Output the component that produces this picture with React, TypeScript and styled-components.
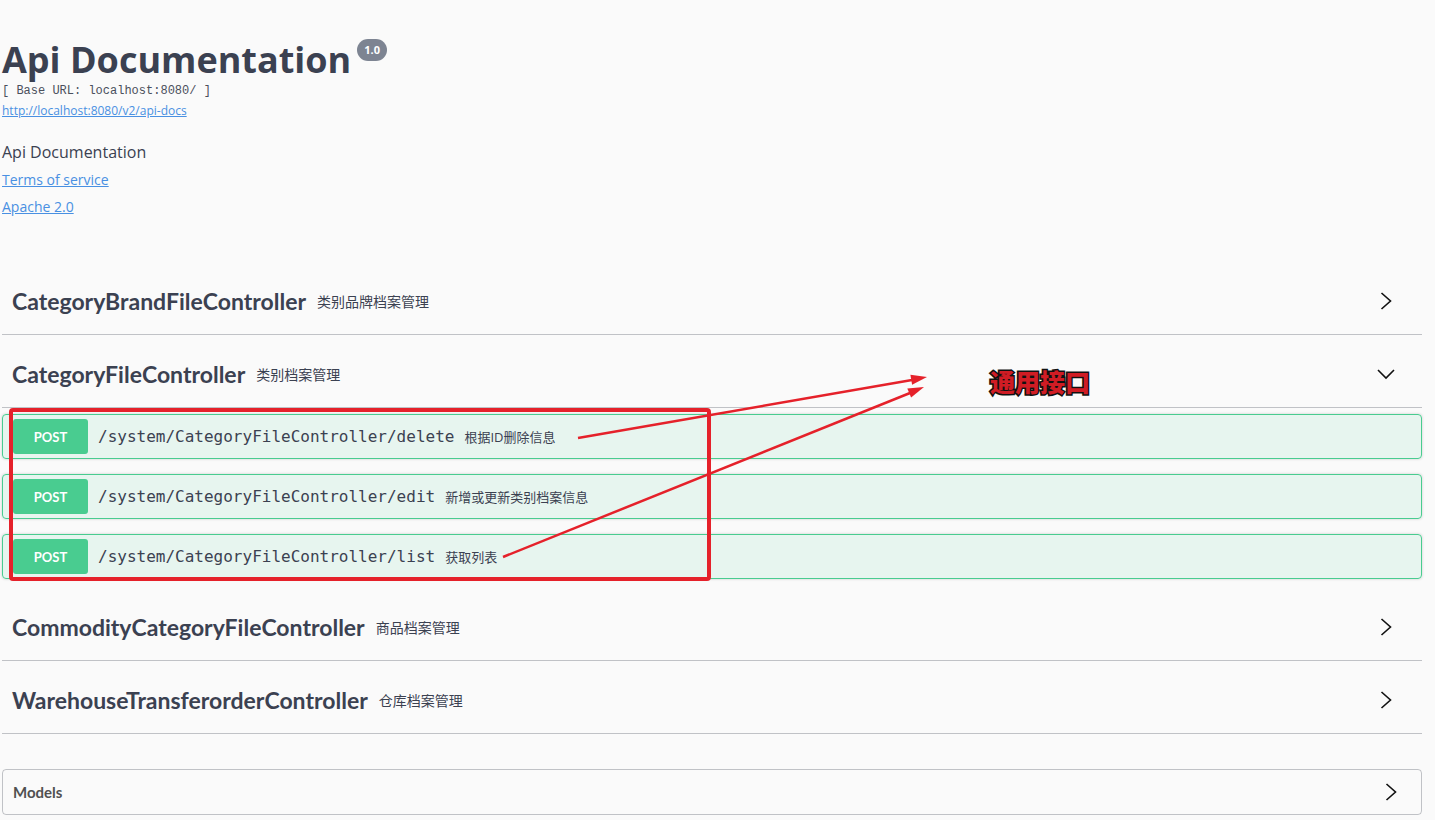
import React from "react";
import styled, { createGlobalStyle } from "styled-components";

const GlobalStyle = createGlobalStyle`
  html, body {
    margin: 0;
    padding: 0;
    background: #fafafa;
  }
  body {
    font-family: "Open Sans", "Noto Sans CJK SC", sans-serif;
    color: #3b4151;
  }
`;

const Shell = styled.div`
  position: relative;
  width: 1435px;
  min-height: 820px;
  overflow: hidden;
`;

const Page = styled.div`
  padding: 0 13px 0 2px;
`;

const Info = styled.div`
  padding-top: 38px;
  display: flex;
  flex-direction: column;
  align-items: flex-start;
`;

const TitleRow = styled.div`
  display: flex;
  align-items: flex-start;
  height: 44px;
`;

const Title = styled.h2`
  margin: 0;
  font-family: "Open Sans", sans-serif;
  font-weight: 700;
  font-size: 36px;
  line-height: 44px;
  color: #3b4151;
`;

const Version = styled.span`
  margin: 1px 0 0 6px;
  padding: 4px 7px;
  border-radius: 57px;
  background: #7d8492;
  color: #fff;
  font-family: "Open Sans", sans-serif;
  font-weight: 700;
  font-size: 11px;
  line-height: 14px;
`;

const BaseUrl = styled.pre`
  margin: 2px 0 0;
  font-family: "Liberation Mono", monospace;
  font-size: 12px;
  line-height: 14px;
  color: #4a4f5c;
`;

const Link = styled.a<{ $size: number; $top: number }>`
  margin-top: ${(p) => p.$top}px;
  font-family: "Open Sans", sans-serif;
  font-size: ${(p) => p.$size}px;
  line-height: ${(p) => (p.$size === 12 ? 16 : 20)}px;
  color: #4990e2;
  text-decoration: underline;
`;

const Description = styled.p`
  margin: 22px 0 0;
  font-size: 16px;
  line-height: 22px;
  color: #3b4151;
`;

const Tags = styled.div`
  margin-top: 51px;
`;

const TagSection = styled.section`
  margin-bottom: 6px;
`;

const TagHeader = styled.div`
  height: 66px;
  display: flex;
  align-items: center;
  padding: 0 26px 0 10px;
  border-bottom: 1px solid rgba(59, 65, 81, 0.3);
`;

const TagName = styled.span`
  font-family: "Lato", sans-serif;
  font-weight: 700;
  font-size: 23px;
  color: #3b4151;
`;

const TagDesc = styled.small`
  margin-left: 11px;
  font-family: "Open Sans", "Noto Sans CJK SC", sans-serif;
  font-size: 14px;
  color: #3b4151;
  flex: 1;
`;

const Chevron = styled.svg`
  width: 20px;
  height: 20px;
  flex: none;
`;

const Ops = styled.div`
  padding-top: 6px;
`;

const Op = styled.div`
  display: flex;
  align-items: center;
  margin-bottom: 15px;
  padding: 4px 5px 4px 10px;
  border: 1px solid #49cc90;
  border-radius: 4px;
  background: rgba(73, 204, 144, 0.1);
  box-shadow: 0 0 3px rgba(0, 0, 0, 0.19);
`;

const Method = styled.span`
  width: 75px;
  height: 35px;
  display: flex;
  align-items: center;
  justify-content: center;
  border-radius: 3px;
  background: #49cc90;
  color: #fff;
  font-family: "Lato", sans-serif;
  font-weight: 700;
  font-size: 13px;
`;

const Path = styled.span`
  margin-left: 10px;
  font-family: "DejaVu Sans Mono", monospace;
  font-size: 16px;
  color: #3b4151;
`;

const OpDesc = styled.span`
  margin-left: 10px;
  font-family: "Open Sans", "Noto Sans CJK SC", sans-serif;
  font-size: 13px;
  color: #3b4151;
`;

const Models = styled.section`
  margin-top: 35px;
  height: 46px;
  box-sizing: border-box;
  display: flex;
  align-items: center;
  justify-content: space-between;
  padding: 0 20px 0 10px;
  border: 1px solid rgba(59, 65, 81, 0.3);
  border-radius: 4px;
`;

const ModelsTitle = styled.span`
  font-family: "Lato", sans-serif;
  font-weight: 700;
  font-size: 15px;
  color: #505050;
`;

const Overlay = styled.svg`
  position: absolute;
  left: 0;
  top: 0;
  width: 1435px;
  height: 820px;
  pointer-events: none;
`;

const RightArrow = () => (
  <Chevron viewBox="0 0 20 20">
    <path d="M5.5 2 L14.5 10 L5.5 18" fill="none" stroke="#111" strokeWidth="1.6" />
  </Chevron>
);

const DownArrow = () => (
  <Chevron viewBox="0 0 20 20">
    <path d="M2 6 L10 14 L18 6" fill="none" stroke="#111" strokeWidth="1.6" />
  </Chevron>
);

type Operation = { path: string; desc: string };

const tags: { name: string; desc: string; open?: boolean; ops?: Operation[] }[] = [
  { name: "CategoryBrandFileController", desc: "类别品牌档案管理" },
  {
    name: "CategoryFileController",
    desc: "类别档案管理",
    open: true,
    ops: [
      { path: "/system/CategoryFileController/delete", desc: "根据ID删除信息" },
      { path: "/system/CategoryFileController/edit", desc: "新增或更新类别档案信息" },
      { path: "/system/CategoryFileController/list", desc: "获取列表" },
    ],
  },
  { name: "CommodityCategoryFileController", desc: "商品档案管理" },
  { name: "WarehouseTransferorderController", desc: "仓库档案管理" },
];

const red = "#e5212a";

export default function App() {
  return (
    <Shell>
      <GlobalStyle />
      <Page>
        <Info>
          <TitleRow>
            <Title>Api Documentation</Title>
            <Version>1.0</Version>
          </TitleRow>
          <BaseUrl>[ Base URL: localhost:8080/ ]</BaseUrl>
          <Link $size={12} $top={5} href="#">
            http://localhost:8080/v2/api-docs
          </Link>
          <Description>Api Documentation</Description>
          <Link $size={14} $top={7} href="#">
            Terms of service
          </Link>
          <Link $size={14} $top={7} href="#">
            Apache 2.0
          </Link>
        </Info>
        <Tags>
          {tags.map((t) => (
            <TagSection key={t.name}>
              <TagHeader>
                <TagName>{t.name}</TagName>
                <TagDesc>{t.desc}</TagDesc>
                {t.open ? <DownArrow /> : <RightArrow />}
              </TagHeader>
              {t.open && t.ops && (
                <Ops>
                  {t.ops.map((o) => (
                    <Op key={o.path}>
                      <Method>POST</Method>
                      <Path>{o.path}</Path>
                      <OpDesc>{o.desc}</OpDesc>
                    </Op>
                  ))}
                </Ops>
              )}
            </TagSection>
          ))}
        </Tags>
        <Models>
          <ModelsTitle>Models</ModelsTitle>
          <RightArrow />
        </Models>
      </Page>
      <Overlay viewBox="0 0 1435 820">
        <rect x="11" y="410" width="698" height="169" rx="2" fill="none" stroke={red} strokeWidth="4" />
        <line x1="578" y1="438" x2="912" y2="380" stroke={red} strokeWidth="2.5" />
        <polygon points="927,377 912.1,384.7 910.4,374.8" fill={red} />
        <line x1="503" y1="557" x2="910" y2="393" stroke={red} strokeWidth="2.5" />
        <polygon points="924,387 911.1,397.6 907.3,388.4" fill={red} />
        <text
          x="990"
          y="392"
          fontFamily='"Noto Sans CJK SC", sans-serif'
          fontWeight="900"
          fontSize="25"
          fill="#d01c24"
          stroke="#111"
          strokeWidth="3"
          paintOrder="stroke"
        >
          通用接口
        </text>
      </Overlay>
    </Shell>
  );
}
